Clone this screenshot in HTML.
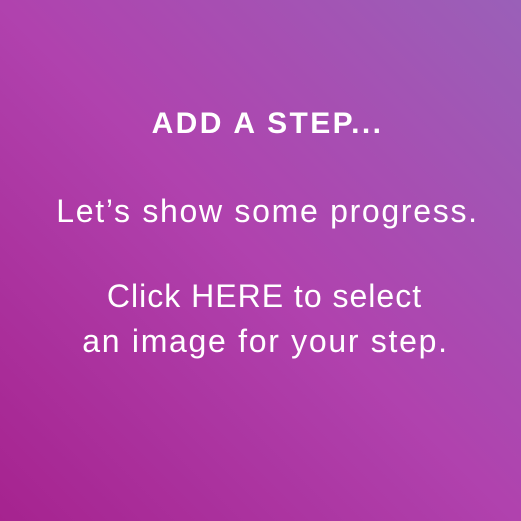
<!DOCTYPE html>
<html><head><style>
html,body{margin:0;padding:0}
body{width:521px;height:521px;overflow:hidden;background:linear-gradient(45deg,#a6238f 0%,#b042ae 50%,#9a60b8 100%);font-family:"Liberation Sans",sans-serif;color:#fff;position:relative}
.t{position:absolute;left:7px;width:521px;text-align:center;white-space:nowrap}
.l{font-size:32px;letter-spacing:1.7px}
</style></head><body>
<div class="t" style="top:107px;font-size:30px;font-weight:bold;letter-spacing:2.4px;">ADD A STEP...</div>
<div class="t l" style="top:193px;">Let’s show some progress.</div>
<div class="t l" style="top:278px;letter-spacing:1px;left:4px;">Click HERE to select</div>
<div class="t l" style="top:323px;left:5px;">an image for your step.</div>
</body></html>
